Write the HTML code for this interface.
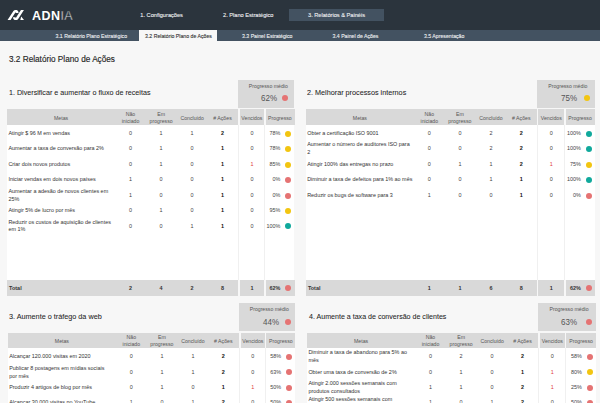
<!DOCTYPE html>
<html><head><meta charset="utf-8"><title>ADNIA - 3.2 Relatório Plano de Ações</title>
<style>
html,body{margin:0;padding:0;}
body{width:600px;height:403px;overflow:hidden;position:relative;background:#f7f7f7;font-family:"Liberation Sans", sans-serif;}
.t{position:absolute;white-space:nowrap;}
.r{position:absolute;}
</style></head><body>
<div class="r" style="left:0.00px;top:0.00px;width:600.00px;height:30.00px;background:#2b343d;"></div>
<div class="r" style="left:289.00px;top:9.00px;width:95.00px;height:12.00px;background:#435261;"></div>
<div class="r" style="left:0.00px;top:30.00px;width:600.00px;height:11.00px;background:#435261;"></div>
<div class="r" style="left:139.00px;top:30.00px;width:78.00px;height:11.00px;background:#f7f7f7;"></div>
<svg class="r" style="left:0;top:0" width="40" height="30" viewBox="0 0 40 30">
<defs><clipPath id="lc"><rect x="0" y="10.1" width="40" height="9.8"/></clipPath></defs>
<g clip-path="url(#lc)" fill="none" stroke="#fff" stroke-width="2.5" stroke-linejoin="round">
<path d="M8.4 21 L14.3 11.9 Q15.1 10.9 16.3 11.2 Q17.4 11.6 17.3 13.0"/>
<path d="M23.3 8.7 L17.1 18.2 Q16.4 19.1 15.3 18.9 Q14.2 18.6 14.2 17.3"/>
</g>
<path d="M21.2 16.4 L24 20 L20.3 20 Z" fill="#fff"/>
</svg>
<div class="t" style="left:32.00px;top:9.72px;font-size:12.5px;line-height:12.5px;color:#fff;font-weight:bold;letter-spacing:0.45px;">ADN<span style="font-weight:normal;-webkit-text-stroke:0.45px #2b343d">IA</span></div>
<div class="t" style="left:140.30px;top:13.12px;font-size:5.65px;line-height:5.65px;color:#eef0f2;font-weight:normal;-webkit-text-stroke:0.1px #eef0f2;">1. Configurações</div>
<div class="t" style="left:223.00px;top:13.12px;font-size:5.65px;line-height:5.65px;color:#eef0f2;font-weight:normal;-webkit-text-stroke:0.1px #eef0f2;">2. Plano Estratégico</div>
<div class="t" style="left:308.00px;top:13.12px;font-size:5.65px;line-height:5.65px;color:#eef0f2;font-weight:normal;-webkit-text-stroke:0.1px #eef0f2;">3. Relatórios &amp; Painéis</div>
<div class="t" style="left:55.50px;top:33.90px;font-size:5.2px;line-height:5.2px;color:#eef0f2;font-weight:normal;-webkit-text-stroke:0.1px #eef0f2;">3.1 Relatório Plano Estratégico</div>
<div class="t" style="left:145.00px;top:33.90px;font-size:5.2px;line-height:5.2px;color:#333;font-weight:normal;-webkit-text-stroke:0.1px #333;">3.2 Relatório Plano de Ações</div>
<div class="t" style="left:242.00px;top:33.90px;font-size:5.2px;line-height:5.2px;color:#eef0f2;font-weight:normal;-webkit-text-stroke:0.1px #eef0f2;">3.3 Painel Estratégico</div>
<div class="t" style="left:332.50px;top:33.90px;font-size:5.2px;line-height:5.2px;color:#eef0f2;font-weight:normal;-webkit-text-stroke:0.1px #eef0f2;">3.4 Painel de Ações</div>
<div class="t" style="left:424.00px;top:33.90px;font-size:5.2px;line-height:5.2px;color:#eef0f2;font-weight:normal;-webkit-text-stroke:0.1px #eef0f2;">3.5 Apresentação</div>
<div class="t" style="left:9.00px;top:54.81px;font-size:8.85px;line-height:8.85px;color:#262626;font-weight:normal;transform:scaleX(0.929);transform-origin:0 0;-webkit-text-stroke:0.15px #262626;">3.2 Relatório Plano de Ações</div>
<div class="t" style="left:8.60px;top:89.28px;font-size:7.7px;line-height:7.7px;color:#1e1e1e;font-weight:normal;transform:scaleX(0.93);transform-origin:0 0;-webkit-text-stroke:0.06px #1e1e1e;">1. Diversificar e aumentar o fluxo de receitas</div>
<div class="r" style="left:238.30px;top:79.50px;width:56.20px;height:28.40px;background:#d9d9d9;"></div>
<div class="t" style="left:208.30px;width:120px;text-align:center;top:83.90px;font-size:5.2px;line-height:5.2px;color:#555;font-weight:normal;">Progresso médio</div>
<div class="t" style="left:156.90px;width:120px;text-align:right;top:94.22px;font-size:8.6px;line-height:8.6px;color:#555;font-weight:normal;transform:scaleX(0.93);transform-origin:100% 0;">62%</div>
<div class="r" style="left:282.00px;top:95.10px;width:6px;height:6px;border-radius:50%;background:#e57373"></div>
<div class="r" style="left:7.10px;top:109.40px;width:231.20px;height:15.30px;background:#d9d9d9;"></div>
<div class="r" style="left:239.50px;top:109.40px;width:24.80px;height:15.30px;background:#d9d9d9;"></div>
<div class="r" style="left:265.50px;top:109.40px;width:29.00px;height:15.30px;background:#d9d9d9;"></div>
<div class="r" style="left:7.10px;top:124.70px;width:287.40px;height:155.30px;background:#fff;"></div>
<div class="r" style="left:238.30px;top:124.70px;width:1.00px;height:155.30px;background:#f0f0f0;"></div>
<div class="r" style="left:264.30px;top:124.70px;width:1.00px;height:155.30px;background:#f0f0f0;"></div>
<div class="r" style="left:7.10px;top:280.00px;width:231.20px;height:15.60px;background:#d9d9d9;"></div>
<div class="r" style="left:239.50px;top:280.00px;width:24.80px;height:15.60px;background:#d9d9d9;"></div>
<div class="r" style="left:265.50px;top:280.00px;width:29.00px;height:15.60px;background:#d9d9d9;"></div>
<div class="t" style="left:1.10px;width:120px;text-align:center;top:115.60px;font-size:5.2px;line-height:5.2px;color:#555;font-weight:normal;">Metas</div>
<div class="t" style="left:70.50px;width:120px;text-align:center;top:111.60px;font-size:5.2px;line-height:5.2px;color:#555;font-weight:normal;">Não</div>
<div class="t" style="left:70.50px;width:120px;text-align:center;top:119.00px;font-size:5.2px;line-height:5.2px;color:#555;font-weight:normal;">iniciado</div>
<div class="t" style="left:101.10px;width:120px;text-align:center;top:111.60px;font-size:5.2px;line-height:5.2px;color:#555;font-weight:normal;">Em</div>
<div class="t" style="left:101.10px;width:120px;text-align:center;top:119.00px;font-size:5.2px;line-height:5.2px;color:#555;font-weight:normal;">progresso</div>
<div class="t" style="left:132.10px;width:120px;text-align:center;top:115.60px;font-size:5.2px;line-height:5.2px;color:#555;font-weight:normal;">Concluído</div>
<div class="t" style="left:162.50px;width:120px;text-align:center;top:115.60px;font-size:5.2px;line-height:5.2px;color:#555;font-weight:normal;"># Ações</div>
<div class="t" style="left:191.90px;width:120px;text-align:center;top:115.60px;font-size:5.2px;line-height:5.2px;color:#555;font-weight:normal;">Vencidos</div>
<div class="t" style="left:219.90px;width:120px;text-align:center;top:115.60px;font-size:5.2px;line-height:5.2px;color:#555;font-weight:normal;">Progresso</div>
<div class="t" style="left:8.40px;top:130.80px;font-size:5.43px;line-height:5.43px;color:#333;font-weight:normal;">Atingir $ 96 M em vendas</div>
<div class="t" style="left:70.50px;width:120px;text-align:center;top:130.80px;font-size:5.43px;line-height:5.43px;color:#444;font-weight:normal;">0</div>
<div class="t" style="left:101.10px;width:120px;text-align:center;top:130.80px;font-size:5.43px;line-height:5.43px;color:#444;font-weight:normal;">1</div>
<div class="t" style="left:132.10px;width:120px;text-align:center;top:130.80px;font-size:5.43px;line-height:5.43px;color:#444;font-weight:normal;">1</div>
<div class="t" style="left:162.50px;width:120px;text-align:center;top:130.80px;font-size:5.43px;line-height:5.43px;color:#111;font-weight:bold;">2</div>
<div class="t" style="left:191.90px;width:120px;text-align:center;top:130.80px;font-size:5.43px;line-height:5.43px;color:#444;font-weight:normal;">0</div>
<div class="t" style="left:160.30px;width:120px;text-align:right;top:130.80px;font-size:5.43px;line-height:5.43px;color:#444;font-weight:normal;">78%</div>
<div class="r" style="left:284.80px;top:130.70px;width:6px;height:6px;border-radius:50%;background:#f2c511"></div>
<div class="t" style="left:8.40px;top:146.25px;font-size:5.43px;line-height:5.43px;color:#333;font-weight:normal;">Aumentar a taxa de conversão para 2%</div>
<div class="t" style="left:70.50px;width:120px;text-align:center;top:146.25px;font-size:5.43px;line-height:5.43px;color:#444;font-weight:normal;">0</div>
<div class="t" style="left:101.10px;width:120px;text-align:center;top:146.25px;font-size:5.43px;line-height:5.43px;color:#444;font-weight:normal;">1</div>
<div class="t" style="left:132.10px;width:120px;text-align:center;top:146.25px;font-size:5.43px;line-height:5.43px;color:#444;font-weight:normal;">0</div>
<div class="t" style="left:162.50px;width:120px;text-align:center;top:146.25px;font-size:5.43px;line-height:5.43px;color:#111;font-weight:bold;">1</div>
<div class="t" style="left:191.90px;width:120px;text-align:center;top:146.25px;font-size:5.43px;line-height:5.43px;color:#444;font-weight:normal;">0</div>
<div class="t" style="left:160.30px;width:120px;text-align:right;top:146.25px;font-size:5.43px;line-height:5.43px;color:#444;font-weight:normal;">78%</div>
<div class="r" style="left:284.80px;top:146.15px;width:6px;height:6px;border-radius:50%;background:#f2c511"></div>
<div class="t" style="left:8.40px;top:161.70px;font-size:5.43px;line-height:5.43px;color:#333;font-weight:normal;">Criar dois novos produtos</div>
<div class="t" style="left:70.50px;width:120px;text-align:center;top:161.70px;font-size:5.43px;line-height:5.43px;color:#444;font-weight:normal;">0</div>
<div class="t" style="left:101.10px;width:120px;text-align:center;top:161.70px;font-size:5.43px;line-height:5.43px;color:#444;font-weight:normal;">1</div>
<div class="t" style="left:132.10px;width:120px;text-align:center;top:161.70px;font-size:5.43px;line-height:5.43px;color:#444;font-weight:normal;">0</div>
<div class="t" style="left:162.50px;width:120px;text-align:center;top:161.70px;font-size:5.43px;line-height:5.43px;color:#111;font-weight:bold;">1</div>
<div class="t" style="left:191.90px;width:120px;text-align:center;top:161.70px;font-size:5.43px;line-height:5.43px;color:#e03c3c;font-weight:normal;">1</div>
<div class="t" style="left:160.30px;width:120px;text-align:right;top:161.70px;font-size:5.43px;line-height:5.43px;color:#444;font-weight:normal;">85%</div>
<div class="r" style="left:284.80px;top:161.60px;width:6px;height:6px;border-radius:50%;background:#f2c511"></div>
<div class="t" style="left:8.40px;top:177.15px;font-size:5.43px;line-height:5.43px;color:#333;font-weight:normal;">Iniciar vendas em dois novos países</div>
<div class="t" style="left:70.50px;width:120px;text-align:center;top:177.15px;font-size:5.43px;line-height:5.43px;color:#444;font-weight:normal;">1</div>
<div class="t" style="left:101.10px;width:120px;text-align:center;top:177.15px;font-size:5.43px;line-height:5.43px;color:#444;font-weight:normal;">0</div>
<div class="t" style="left:132.10px;width:120px;text-align:center;top:177.15px;font-size:5.43px;line-height:5.43px;color:#444;font-weight:normal;">0</div>
<div class="t" style="left:162.50px;width:120px;text-align:center;top:177.15px;font-size:5.43px;line-height:5.43px;color:#111;font-weight:bold;">1</div>
<div class="t" style="left:191.90px;width:120px;text-align:center;top:177.15px;font-size:5.43px;line-height:5.43px;color:#444;font-weight:normal;">0</div>
<div class="t" style="left:160.30px;width:120px;text-align:right;top:177.15px;font-size:5.43px;line-height:5.43px;color:#444;font-weight:normal;">0%</div>
<div class="r" style="left:284.80px;top:177.05px;width:6px;height:6px;border-radius:50%;background:#e57373"></div>
<div class="t" style="left:8.40px;top:188.65px;font-size:5.43px;line-height:5.43px;color:#333;font-weight:normal;">Aumentar a adesão de novos clientes em</div>
<div class="t" style="left:8.40px;top:196.55px;font-size:5.43px;line-height:5.43px;color:#333;font-weight:normal;">25%</div>
<div class="t" style="left:70.50px;width:120px;text-align:center;top:192.60px;font-size:5.43px;line-height:5.43px;color:#444;font-weight:normal;">1</div>
<div class="t" style="left:101.10px;width:120px;text-align:center;top:192.60px;font-size:5.43px;line-height:5.43px;color:#444;font-weight:normal;">0</div>
<div class="t" style="left:132.10px;width:120px;text-align:center;top:192.60px;font-size:5.43px;line-height:5.43px;color:#444;font-weight:normal;">0</div>
<div class="t" style="left:162.50px;width:120px;text-align:center;top:192.60px;font-size:5.43px;line-height:5.43px;color:#111;font-weight:bold;">1</div>
<div class="t" style="left:191.90px;width:120px;text-align:center;top:192.60px;font-size:5.43px;line-height:5.43px;color:#444;font-weight:normal;">0</div>
<div class="t" style="left:160.30px;width:120px;text-align:right;top:192.60px;font-size:5.43px;line-height:5.43px;color:#444;font-weight:normal;">0%</div>
<div class="r" style="left:284.80px;top:192.50px;width:6px;height:6px;border-radius:50%;background:#e57373"></div>
<div class="t" style="left:8.40px;top:208.05px;font-size:5.43px;line-height:5.43px;color:#333;font-weight:normal;">Atingir 5% de lucro por mês</div>
<div class="t" style="left:70.50px;width:120px;text-align:center;top:208.05px;font-size:5.43px;line-height:5.43px;color:#444;font-weight:normal;">0</div>
<div class="t" style="left:101.10px;width:120px;text-align:center;top:208.05px;font-size:5.43px;line-height:5.43px;color:#444;font-weight:normal;">1</div>
<div class="t" style="left:132.10px;width:120px;text-align:center;top:208.05px;font-size:5.43px;line-height:5.43px;color:#444;font-weight:normal;">0</div>
<div class="t" style="left:162.50px;width:120px;text-align:center;top:208.05px;font-size:5.43px;line-height:5.43px;color:#111;font-weight:bold;">1</div>
<div class="t" style="left:191.90px;width:120px;text-align:center;top:208.05px;font-size:5.43px;line-height:5.43px;color:#444;font-weight:normal;">0</div>
<div class="t" style="left:160.30px;width:120px;text-align:right;top:208.05px;font-size:5.43px;line-height:5.43px;color:#444;font-weight:normal;">95%</div>
<div class="r" style="left:284.80px;top:207.95px;width:6px;height:6px;border-radius:50%;background:#f2c511"></div>
<div class="t" style="left:8.40px;top:219.55px;font-size:5.43px;line-height:5.43px;color:#333;font-weight:normal;">Reduzir os custos de aquisição de clientes</div>
<div class="t" style="left:8.40px;top:227.45px;font-size:5.43px;line-height:5.43px;color:#333;font-weight:normal;">em 1%</div>
<div class="t" style="left:70.50px;width:120px;text-align:center;top:223.50px;font-size:5.43px;line-height:5.43px;color:#444;font-weight:normal;">0</div>
<div class="t" style="left:101.10px;width:120px;text-align:center;top:223.50px;font-size:5.43px;line-height:5.43px;color:#444;font-weight:normal;">0</div>
<div class="t" style="left:132.10px;width:120px;text-align:center;top:223.50px;font-size:5.43px;line-height:5.43px;color:#444;font-weight:normal;">1</div>
<div class="t" style="left:162.50px;width:120px;text-align:center;top:223.50px;font-size:5.43px;line-height:5.43px;color:#111;font-weight:bold;">1</div>
<div class="t" style="left:191.90px;width:120px;text-align:center;top:223.50px;font-size:5.43px;line-height:5.43px;color:#444;font-weight:normal;">0</div>
<div class="t" style="left:160.30px;width:120px;text-align:right;top:223.50px;font-size:5.43px;line-height:5.43px;color:#444;font-weight:normal;">100%</div>
<div class="r" style="left:284.80px;top:223.40px;width:6px;height:6px;border-radius:50%;background:#10a99c"></div>
<div class="t" style="left:9.10px;top:285.50px;font-size:5.43px;line-height:5.43px;color:#333;font-weight:bold;">Total</div>
<div class="t" style="left:70.50px;width:120px;text-align:center;top:285.50px;font-size:5.43px;line-height:5.43px;color:#333;font-weight:bold;">2</div>
<div class="t" style="left:101.10px;width:120px;text-align:center;top:285.50px;font-size:5.43px;line-height:5.43px;color:#333;font-weight:bold;">4</div>
<div class="t" style="left:132.10px;width:120px;text-align:center;top:285.50px;font-size:5.43px;line-height:5.43px;color:#333;font-weight:bold;">2</div>
<div class="t" style="left:162.50px;width:120px;text-align:center;top:285.50px;font-size:5.43px;line-height:5.43px;color:#333;font-weight:bold;">8</div>
<div class="t" style="left:191.90px;width:120px;text-align:center;top:285.50px;font-size:5.43px;line-height:5.43px;color:#333;font-weight:bold;">1</div>
<div class="t" style="left:160.30px;width:120px;text-align:right;top:285.50px;font-size:5.43px;line-height:5.43px;color:#333;font-weight:bold;">62%</div>
<div class="r" style="left:284.80px;top:285.30px;width:6px;height:6px;border-radius:50%;background:#e57373"></div>
<div class="t" style="left:307.40px;top:89.28px;font-size:7.7px;line-height:7.7px;color:#1e1e1e;font-weight:normal;transform:scaleX(0.9405);transform-origin:0 0;-webkit-text-stroke:0.06px #1e1e1e;">2. Melhorar processos internos</div>
<div class="r" style="left:537.10px;top:79.50px;width:57.65px;height:28.40px;background:#d9d9d9;"></div>
<div class="t" style="left:507.82px;width:120px;text-align:center;top:83.90px;font-size:5.2px;line-height:5.2px;color:#555;font-weight:normal;">Progresso médio</div>
<div class="t" style="left:457.30px;width:120px;text-align:right;top:94.22px;font-size:8.6px;line-height:8.6px;color:#555;font-weight:normal;transform:scaleX(0.93);transform-origin:100% 0;">75%</div>
<div class="r" style="left:584.00px;top:95.10px;width:6px;height:6px;border-radius:50%;background:#f2c511"></div>
<div class="r" style="left:305.90px;top:109.40px;width:231.20px;height:15.30px;background:#d9d9d9;"></div>
<div class="r" style="left:538.30px;top:109.40px;width:26.00px;height:15.30px;background:#d9d9d9;"></div>
<div class="r" style="left:565.50px;top:109.40px;width:29.25px;height:15.30px;background:#d9d9d9;"></div>
<div class="r" style="left:305.90px;top:124.70px;width:288.85px;height:155.30px;background:#fff;"></div>
<div class="r" style="left:537.10px;top:124.70px;width:1.00px;height:155.30px;background:#f0f0f0;"></div>
<div class="r" style="left:564.30px;top:124.70px;width:1.00px;height:155.30px;background:#f0f0f0;"></div>
<div class="r" style="left:305.90px;top:280.00px;width:231.20px;height:15.60px;background:#d9d9d9;"></div>
<div class="r" style="left:538.30px;top:280.00px;width:26.00px;height:15.60px;background:#d9d9d9;"></div>
<div class="r" style="left:565.50px;top:280.00px;width:29.25px;height:15.60px;background:#d9d9d9;"></div>
<div class="t" style="left:299.90px;width:120px;text-align:center;top:115.60px;font-size:5.2px;line-height:5.2px;color:#555;font-weight:normal;">Metas</div>
<div class="t" style="left:369.30px;width:120px;text-align:center;top:111.60px;font-size:5.2px;line-height:5.2px;color:#555;font-weight:normal;">Não</div>
<div class="t" style="left:369.30px;width:120px;text-align:center;top:119.00px;font-size:5.2px;line-height:5.2px;color:#555;font-weight:normal;">iniciado</div>
<div class="t" style="left:399.90px;width:120px;text-align:center;top:111.60px;font-size:5.2px;line-height:5.2px;color:#555;font-weight:normal;">Em</div>
<div class="t" style="left:399.90px;width:120px;text-align:center;top:119.00px;font-size:5.2px;line-height:5.2px;color:#555;font-weight:normal;">progresso</div>
<div class="t" style="left:430.90px;width:120px;text-align:center;top:115.60px;font-size:5.2px;line-height:5.2px;color:#555;font-weight:normal;">Concluído</div>
<div class="t" style="left:461.30px;width:120px;text-align:center;top:115.60px;font-size:5.2px;line-height:5.2px;color:#555;font-weight:normal;"># Ações</div>
<div class="t" style="left:491.30px;width:120px;text-align:center;top:115.60px;font-size:5.2px;line-height:5.2px;color:#555;font-weight:normal;">Vencidos</div>
<div class="t" style="left:520.02px;width:120px;text-align:center;top:115.60px;font-size:5.2px;line-height:5.2px;color:#555;font-weight:normal;">Progresso</div>
<div class="t" style="left:307.20px;top:130.80px;font-size:5.43px;line-height:5.43px;color:#333;font-weight:normal;">Obter a certificação ISO 9001</div>
<div class="t" style="left:369.30px;width:120px;text-align:center;top:130.80px;font-size:5.43px;line-height:5.43px;color:#444;font-weight:normal;">0</div>
<div class="t" style="left:399.90px;width:120px;text-align:center;top:130.80px;font-size:5.43px;line-height:5.43px;color:#444;font-weight:normal;">0</div>
<div class="t" style="left:430.90px;width:120px;text-align:center;top:130.80px;font-size:5.43px;line-height:5.43px;color:#444;font-weight:normal;">2</div>
<div class="t" style="left:461.30px;width:120px;text-align:center;top:130.80px;font-size:5.43px;line-height:5.43px;color:#111;font-weight:bold;">2</div>
<div class="t" style="left:491.30px;width:120px;text-align:center;top:130.80px;font-size:5.43px;line-height:5.43px;color:#444;font-weight:normal;">0</div>
<div class="t" style="left:460.80px;width:120px;text-align:right;top:130.80px;font-size:5.43px;line-height:5.43px;color:#444;font-weight:normal;">100%</div>
<div class="r" style="left:585.70px;top:130.70px;width:6px;height:6px;border-radius:50%;background:#10a99c"></div>
<div class="t" style="left:307.20px;top:142.30px;font-size:5.43px;line-height:5.43px;color:#333;font-weight:normal;">Aumentar o número de auditores ISO para</div>
<div class="t" style="left:307.20px;top:150.20px;font-size:5.43px;line-height:5.43px;color:#333;font-weight:normal;">2</div>
<div class="t" style="left:369.30px;width:120px;text-align:center;top:146.25px;font-size:5.43px;line-height:5.43px;color:#444;font-weight:normal;">0</div>
<div class="t" style="left:399.90px;width:120px;text-align:center;top:146.25px;font-size:5.43px;line-height:5.43px;color:#444;font-weight:normal;">0</div>
<div class="t" style="left:430.90px;width:120px;text-align:center;top:146.25px;font-size:5.43px;line-height:5.43px;color:#444;font-weight:normal;">2</div>
<div class="t" style="left:461.30px;width:120px;text-align:center;top:146.25px;font-size:5.43px;line-height:5.43px;color:#111;font-weight:bold;">2</div>
<div class="t" style="left:491.30px;width:120px;text-align:center;top:146.25px;font-size:5.43px;line-height:5.43px;color:#444;font-weight:normal;">0</div>
<div class="t" style="left:460.80px;width:120px;text-align:right;top:146.25px;font-size:5.43px;line-height:5.43px;color:#444;font-weight:normal;">100%</div>
<div class="r" style="left:585.70px;top:146.15px;width:6px;height:6px;border-radius:50%;background:#10a99c"></div>
<div class="t" style="left:307.20px;top:161.70px;font-size:5.43px;line-height:5.43px;color:#333;font-weight:normal;">Atingir 100% das entregas no prazo</div>
<div class="t" style="left:369.30px;width:120px;text-align:center;top:161.70px;font-size:5.43px;line-height:5.43px;color:#444;font-weight:normal;">0</div>
<div class="t" style="left:399.90px;width:120px;text-align:center;top:161.70px;font-size:5.43px;line-height:5.43px;color:#444;font-weight:normal;">1</div>
<div class="t" style="left:430.90px;width:120px;text-align:center;top:161.70px;font-size:5.43px;line-height:5.43px;color:#444;font-weight:normal;">1</div>
<div class="t" style="left:461.30px;width:120px;text-align:center;top:161.70px;font-size:5.43px;line-height:5.43px;color:#111;font-weight:bold;">2</div>
<div class="t" style="left:491.30px;width:120px;text-align:center;top:161.70px;font-size:5.43px;line-height:5.43px;color:#e03c3c;font-weight:normal;">1</div>
<div class="t" style="left:460.80px;width:120px;text-align:right;top:161.70px;font-size:5.43px;line-height:5.43px;color:#444;font-weight:normal;">75%</div>
<div class="r" style="left:585.70px;top:161.60px;width:6px;height:6px;border-radius:50%;background:#f2c511"></div>
<div class="t" style="left:307.20px;top:177.15px;font-size:5.43px;line-height:5.43px;color:#333;font-weight:normal;">Diminuir a taxa de defeitos para 1% ao mês</div>
<div class="t" style="left:369.30px;width:120px;text-align:center;top:177.15px;font-size:5.43px;line-height:5.43px;color:#444;font-weight:normal;">0</div>
<div class="t" style="left:399.90px;width:120px;text-align:center;top:177.15px;font-size:5.43px;line-height:5.43px;color:#444;font-weight:normal;">0</div>
<div class="t" style="left:430.90px;width:120px;text-align:center;top:177.15px;font-size:5.43px;line-height:5.43px;color:#444;font-weight:normal;">1</div>
<div class="t" style="left:461.30px;width:120px;text-align:center;top:177.15px;font-size:5.43px;line-height:5.43px;color:#111;font-weight:bold;">1</div>
<div class="t" style="left:491.30px;width:120px;text-align:center;top:177.15px;font-size:5.43px;line-height:5.43px;color:#444;font-weight:normal;">0</div>
<div class="t" style="left:460.80px;width:120px;text-align:right;top:177.15px;font-size:5.43px;line-height:5.43px;color:#444;font-weight:normal;">100%</div>
<div class="r" style="left:585.70px;top:177.05px;width:6px;height:6px;border-radius:50%;background:#10a99c"></div>
<div class="t" style="left:307.20px;top:192.60px;font-size:5.43px;line-height:5.43px;color:#333;font-weight:normal;">Reduzir os bugs de software para 3</div>
<div class="t" style="left:369.30px;width:120px;text-align:center;top:192.60px;font-size:5.43px;line-height:5.43px;color:#444;font-weight:normal;">1</div>
<div class="t" style="left:399.90px;width:120px;text-align:center;top:192.60px;font-size:5.43px;line-height:5.43px;color:#444;font-weight:normal;">0</div>
<div class="t" style="left:430.90px;width:120px;text-align:center;top:192.60px;font-size:5.43px;line-height:5.43px;color:#444;font-weight:normal;">0</div>
<div class="t" style="left:461.30px;width:120px;text-align:center;top:192.60px;font-size:5.43px;line-height:5.43px;color:#111;font-weight:bold;">1</div>
<div class="t" style="left:491.30px;width:120px;text-align:center;top:192.60px;font-size:5.43px;line-height:5.43px;color:#444;font-weight:normal;">0</div>
<div class="t" style="left:460.80px;width:120px;text-align:right;top:192.60px;font-size:5.43px;line-height:5.43px;color:#444;font-weight:normal;">0%</div>
<div class="r" style="left:585.70px;top:192.50px;width:6px;height:6px;border-radius:50%;background:#e57373"></div>
<div class="t" style="left:307.90px;top:285.50px;font-size:5.43px;line-height:5.43px;color:#333;font-weight:bold;">Total</div>
<div class="t" style="left:369.30px;width:120px;text-align:center;top:285.50px;font-size:5.43px;line-height:5.43px;color:#333;font-weight:bold;">1</div>
<div class="t" style="left:399.90px;width:120px;text-align:center;top:285.50px;font-size:5.43px;line-height:5.43px;color:#333;font-weight:bold;">1</div>
<div class="t" style="left:430.90px;width:120px;text-align:center;top:285.50px;font-size:5.43px;line-height:5.43px;color:#333;font-weight:bold;">6</div>
<div class="t" style="left:461.30px;width:120px;text-align:center;top:285.50px;font-size:5.43px;line-height:5.43px;color:#333;font-weight:bold;">8</div>
<div class="t" style="left:491.30px;width:120px;text-align:center;top:285.50px;font-size:5.43px;line-height:5.43px;color:#333;font-weight:bold;">1</div>
<div class="t" style="left:460.80px;width:120px;text-align:right;top:285.50px;font-size:5.43px;line-height:5.43px;color:#333;font-weight:bold;">62%</div>
<div class="r" style="left:585.70px;top:285.30px;width:6px;height:6px;border-radius:50%;background:#e57373"></div>
<div class="t" style="left:9.40px;top:312.58px;font-size:7.7px;line-height:7.7px;color:#1e1e1e;font-weight:normal;transform:scaleX(0.943);transform-origin:0 0;-webkit-text-stroke:0.06px #1e1e1e;">3. Aumente o tráfego da web</div>
<div class="r" style="left:239.30px;top:302.80px;width:56.20px;height:28.40px;background:#d9d9d9;"></div>
<div class="t" style="left:209.30px;width:120px;text-align:center;top:307.20px;font-size:5.2px;line-height:5.2px;color:#555;font-weight:normal;">Progresso médio</div>
<div class="t" style="left:158.90px;width:120px;text-align:right;top:317.52px;font-size:8.6px;line-height:8.6px;color:#555;font-weight:normal;transform:scaleX(0.93);transform-origin:100% 0;">44%</div>
<div class="r" style="left:284.90px;top:318.80px;width:6px;height:6px;border-radius:50%;background:#e57373"></div>
<div class="r" style="left:7.90px;top:332.70px;width:231.40px;height:15.30px;background:#d9d9d9;"></div>
<div class="r" style="left:240.50px;top:332.70px;width:24.70px;height:15.30px;background:#d9d9d9;"></div>
<div class="r" style="left:266.40px;top:332.70px;width:29.10px;height:15.30px;background:#d9d9d9;"></div>
<div class="r" style="left:7.90px;top:348.00px;width:287.60px;height:155.30px;background:#fff;"></div>
<div class="r" style="left:239.30px;top:348.00px;width:1.00px;height:155.30px;background:#f0f0f0;"></div>
<div class="r" style="left:265.20px;top:348.00px;width:1.00px;height:155.30px;background:#f0f0f0;"></div>
<div class="r" style="left:7.90px;top:503.30px;width:231.40px;height:15.60px;background:#d9d9d9;"></div>
<div class="r" style="left:240.50px;top:503.30px;width:24.70px;height:15.60px;background:#d9d9d9;"></div>
<div class="r" style="left:266.40px;top:503.30px;width:29.10px;height:15.60px;background:#d9d9d9;"></div>
<div class="t" style="left:1.90px;width:120px;text-align:center;top:338.90px;font-size:5.2px;line-height:5.2px;color:#555;font-weight:normal;">Metas</div>
<div class="t" style="left:71.30px;width:120px;text-align:center;top:334.90px;font-size:5.2px;line-height:5.2px;color:#555;font-weight:normal;">Não</div>
<div class="t" style="left:71.30px;width:120px;text-align:center;top:342.30px;font-size:5.2px;line-height:5.2px;color:#555;font-weight:normal;">iniciado</div>
<div class="t" style="left:101.90px;width:120px;text-align:center;top:334.90px;font-size:5.2px;line-height:5.2px;color:#555;font-weight:normal;">Em</div>
<div class="t" style="left:101.90px;width:120px;text-align:center;top:342.30px;font-size:5.2px;line-height:5.2px;color:#555;font-weight:normal;">progresso</div>
<div class="t" style="left:132.90px;width:120px;text-align:center;top:338.90px;font-size:5.2px;line-height:5.2px;color:#555;font-weight:normal;">Concluído</div>
<div class="t" style="left:163.30px;width:120px;text-align:center;top:338.90px;font-size:5.2px;line-height:5.2px;color:#555;font-weight:normal;"># Ações</div>
<div class="t" style="left:192.85px;width:120px;text-align:center;top:338.90px;font-size:5.2px;line-height:5.2px;color:#555;font-weight:normal;">Vencidos</div>
<div class="t" style="left:220.85px;width:120px;text-align:center;top:338.90px;font-size:5.2px;line-height:5.2px;color:#555;font-weight:normal;">Progresso</div>
<div class="t" style="left:9.20px;top:354.10px;font-size:5.43px;line-height:5.43px;color:#333;font-weight:normal;">Alcançar 120.000 visitas em 2020</div>
<div class="t" style="left:71.30px;width:120px;text-align:center;top:354.10px;font-size:5.43px;line-height:5.43px;color:#444;font-weight:normal;">0</div>
<div class="t" style="left:101.90px;width:120px;text-align:center;top:354.10px;font-size:5.43px;line-height:5.43px;color:#444;font-weight:normal;">1</div>
<div class="t" style="left:132.90px;width:120px;text-align:center;top:354.10px;font-size:5.43px;line-height:5.43px;color:#444;font-weight:normal;">1</div>
<div class="t" style="left:163.30px;width:120px;text-align:center;top:354.10px;font-size:5.43px;line-height:5.43px;color:#111;font-weight:bold;">2</div>
<div class="t" style="left:192.85px;width:120px;text-align:center;top:354.10px;font-size:5.43px;line-height:5.43px;color:#444;font-weight:normal;">0</div>
<div class="t" style="left:161.20px;width:120px;text-align:right;top:354.10px;font-size:5.43px;line-height:5.43px;color:#444;font-weight:normal;">58%</div>
<div class="r" style="left:286.00px;top:354.00px;width:6px;height:6px;border-radius:50%;background:#e57373"></div>
<div class="t" style="left:9.20px;top:365.60px;font-size:5.43px;line-height:5.43px;color:#333;font-weight:normal;">Publicar 8 postagens em mídias sociais</div>
<div class="t" style="left:9.20px;top:373.50px;font-size:5.43px;line-height:5.43px;color:#333;font-weight:normal;">por mês</div>
<div class="t" style="left:71.30px;width:120px;text-align:center;top:369.55px;font-size:5.43px;line-height:5.43px;color:#444;font-weight:normal;">0</div>
<div class="t" style="left:101.90px;width:120px;text-align:center;top:369.55px;font-size:5.43px;line-height:5.43px;color:#444;font-weight:normal;">1</div>
<div class="t" style="left:132.90px;width:120px;text-align:center;top:369.55px;font-size:5.43px;line-height:5.43px;color:#444;font-weight:normal;">1</div>
<div class="t" style="left:163.30px;width:120px;text-align:center;top:369.55px;font-size:5.43px;line-height:5.43px;color:#111;font-weight:bold;">2</div>
<div class="t" style="left:192.85px;width:120px;text-align:center;top:369.55px;font-size:5.43px;line-height:5.43px;color:#444;font-weight:normal;">0</div>
<div class="t" style="left:161.20px;width:120px;text-align:right;top:369.55px;font-size:5.43px;line-height:5.43px;color:#444;font-weight:normal;">63%</div>
<div class="r" style="left:286.00px;top:369.45px;width:6px;height:6px;border-radius:50%;background:#e57373"></div>
<div class="t" style="left:9.20px;top:385.00px;font-size:5.43px;line-height:5.43px;color:#333;font-weight:normal;">Produzir 4 artigos de blog por mês</div>
<div class="t" style="left:71.30px;width:120px;text-align:center;top:385.00px;font-size:5.43px;line-height:5.43px;color:#444;font-weight:normal;">0</div>
<div class="t" style="left:101.90px;width:120px;text-align:center;top:385.00px;font-size:5.43px;line-height:5.43px;color:#444;font-weight:normal;">1</div>
<div class="t" style="left:132.90px;width:120px;text-align:center;top:385.00px;font-size:5.43px;line-height:5.43px;color:#444;font-weight:normal;">0</div>
<div class="t" style="left:163.30px;width:120px;text-align:center;top:385.00px;font-size:5.43px;line-height:5.43px;color:#111;font-weight:bold;">1</div>
<div class="t" style="left:192.85px;width:120px;text-align:center;top:385.00px;font-size:5.43px;line-height:5.43px;color:#e03c3c;font-weight:normal;">1</div>
<div class="t" style="left:161.20px;width:120px;text-align:right;top:385.00px;font-size:5.43px;line-height:5.43px;color:#444;font-weight:normal;">50%</div>
<div class="r" style="left:286.00px;top:384.90px;width:6px;height:6px;border-radius:50%;background:#e57373"></div>
<div class="t" style="left:9.20px;top:400.45px;font-size:5.43px;line-height:5.43px;color:#333;font-weight:normal;">Alcançar 30.000 visitas no YouTube</div>
<div class="t" style="left:71.30px;width:120px;text-align:center;top:400.45px;font-size:5.43px;line-height:5.43px;color:#444;font-weight:normal;">1</div>
<div class="t" style="left:101.90px;width:120px;text-align:center;top:400.45px;font-size:5.43px;line-height:5.43px;color:#444;font-weight:normal;">0</div>
<div class="t" style="left:132.90px;width:120px;text-align:center;top:400.45px;font-size:5.43px;line-height:5.43px;color:#444;font-weight:normal;">1</div>
<div class="t" style="left:163.30px;width:120px;text-align:center;top:400.45px;font-size:5.43px;line-height:5.43px;color:#111;font-weight:bold;">2</div>
<div class="t" style="left:192.85px;width:120px;text-align:center;top:400.45px;font-size:5.43px;line-height:5.43px;color:#444;font-weight:normal;">0</div>
<div class="t" style="left:161.20px;width:120px;text-align:right;top:400.45px;font-size:5.43px;line-height:5.43px;color:#444;font-weight:normal;">50%</div>
<div class="r" style="left:286.00px;top:400.35px;width:6px;height:6px;border-radius:50%;background:#e57373"></div>
<div class="t" style="left:9.90px;top:508.80px;font-size:5.43px;line-height:5.43px;color:#333;font-weight:bold;">Total</div>
<div class="t" style="left:71.30px;width:120px;text-align:center;top:508.80px;font-size:5.43px;line-height:5.43px;color:#333;font-weight:bold;">1</div>
<div class="t" style="left:101.90px;width:120px;text-align:center;top:508.80px;font-size:5.43px;line-height:5.43px;color:#333;font-weight:bold;">3</div>
<div class="t" style="left:132.90px;width:120px;text-align:center;top:508.80px;font-size:5.43px;line-height:5.43px;color:#333;font-weight:bold;">3</div>
<div class="t" style="left:163.30px;width:120px;text-align:center;top:508.80px;font-size:5.43px;line-height:5.43px;color:#333;font-weight:bold;">6</div>
<div class="t" style="left:192.85px;width:120px;text-align:center;top:508.80px;font-size:5.43px;line-height:5.43px;color:#333;font-weight:bold;">1</div>
<div class="t" style="left:161.20px;width:120px;text-align:right;top:508.80px;font-size:5.43px;line-height:5.43px;color:#333;font-weight:bold;">44%</div>
<div class="r" style="left:286.00px;top:508.60px;width:6px;height:6px;border-radius:50%;background:#e57373"></div>
<div class="t" style="left:308.60px;top:312.58px;font-size:7.7px;line-height:7.7px;color:#1e1e1e;font-weight:normal;transform:scaleX(0.921);transform-origin:0 0;-webkit-text-stroke:0.06px #1e1e1e;">4. Aumente a taxa de conversão de clientes</div>
<div class="r" style="left:538.30px;top:302.80px;width:57.70px;height:28.40px;background:#d9d9d9;"></div>
<div class="t" style="left:509.05px;width:120px;text-align:center;top:307.20px;font-size:5.2px;line-height:5.2px;color:#555;font-weight:normal;">Progresso médio</div>
<div class="t" style="left:457.20px;width:120px;text-align:right;top:317.52px;font-size:8.6px;line-height:8.6px;color:#555;font-weight:normal;transform:scaleX(0.93);transform-origin:100% 0;">63%</div>
<div class="r" style="left:585.70px;top:319.20px;width:6px;height:6px;border-radius:50%;background:#e57373"></div>
<div class="r" style="left:307.10px;top:332.70px;width:231.20px;height:15.30px;background:#d9d9d9;"></div>
<div class="r" style="left:539.50px;top:332.70px;width:25.70px;height:15.30px;background:#d9d9d9;"></div>
<div class="r" style="left:566.40px;top:332.70px;width:29.60px;height:15.30px;background:#d9d9d9;"></div>
<div class="r" style="left:307.10px;top:348.00px;width:288.90px;height:155.30px;background:#fff;"></div>
<div class="r" style="left:538.30px;top:348.00px;width:1.00px;height:155.30px;background:#f0f0f0;"></div>
<div class="r" style="left:565.20px;top:348.00px;width:1.00px;height:155.30px;background:#f0f0f0;"></div>
<div class="r" style="left:307.10px;top:503.30px;width:231.20px;height:15.60px;background:#d9d9d9;"></div>
<div class="r" style="left:539.50px;top:503.30px;width:25.70px;height:15.60px;background:#d9d9d9;"></div>
<div class="r" style="left:566.40px;top:503.30px;width:29.60px;height:15.60px;background:#d9d9d9;"></div>
<div class="t" style="left:301.10px;width:120px;text-align:center;top:338.90px;font-size:5.2px;line-height:5.2px;color:#555;font-weight:normal;">Metas</div>
<div class="t" style="left:370.50px;width:120px;text-align:center;top:334.90px;font-size:5.2px;line-height:5.2px;color:#555;font-weight:normal;">Não</div>
<div class="t" style="left:370.50px;width:120px;text-align:center;top:342.30px;font-size:5.2px;line-height:5.2px;color:#555;font-weight:normal;">iniciado</div>
<div class="t" style="left:401.10px;width:120px;text-align:center;top:334.90px;font-size:5.2px;line-height:5.2px;color:#555;font-weight:normal;">Em</div>
<div class="t" style="left:401.10px;width:120px;text-align:center;top:342.30px;font-size:5.2px;line-height:5.2px;color:#555;font-weight:normal;">progresso</div>
<div class="t" style="left:432.10px;width:120px;text-align:center;top:338.90px;font-size:5.2px;line-height:5.2px;color:#555;font-weight:normal;">Concluído</div>
<div class="t" style="left:462.50px;width:120px;text-align:center;top:338.90px;font-size:5.2px;line-height:5.2px;color:#555;font-weight:normal;"># Ações</div>
<div class="t" style="left:492.35px;width:120px;text-align:center;top:338.90px;font-size:5.2px;line-height:5.2px;color:#555;font-weight:normal;">Vencidos</div>
<div class="t" style="left:521.10px;width:120px;text-align:center;top:338.90px;font-size:5.2px;line-height:5.2px;color:#555;font-weight:normal;">Progresso</div>
<div class="t" style="left:308.40px;top:350.15px;font-size:5.43px;line-height:5.43px;color:#333;font-weight:normal;">Diminuir a taxa de abandono para 5% ao</div>
<div class="t" style="left:308.40px;top:358.05px;font-size:5.43px;line-height:5.43px;color:#333;font-weight:normal;">mês</div>
<div class="t" style="left:370.50px;width:120px;text-align:center;top:354.10px;font-size:5.43px;line-height:5.43px;color:#444;font-weight:normal;">0</div>
<div class="t" style="left:401.10px;width:120px;text-align:center;top:354.10px;font-size:5.43px;line-height:5.43px;color:#444;font-weight:normal;">2</div>
<div class="t" style="left:432.10px;width:120px;text-align:center;top:354.10px;font-size:5.43px;line-height:5.43px;color:#444;font-weight:normal;">0</div>
<div class="t" style="left:462.50px;width:120px;text-align:center;top:354.10px;font-size:5.43px;line-height:5.43px;color:#111;font-weight:bold;">2</div>
<div class="t" style="left:492.35px;width:120px;text-align:center;top:354.10px;font-size:5.43px;line-height:5.43px;color:#444;font-weight:normal;">0</div>
<div class="t" style="left:461.80px;width:120px;text-align:right;top:354.10px;font-size:5.43px;line-height:5.43px;color:#444;font-weight:normal;">58%</div>
<div class="r" style="left:586.60px;top:354.00px;width:6px;height:6px;border-radius:50%;background:#e57373"></div>
<div class="t" style="left:308.40px;top:369.55px;font-size:5.43px;line-height:5.43px;color:#333;font-weight:normal;">Obter uma taxa de conversão de 2%</div>
<div class="t" style="left:370.50px;width:120px;text-align:center;top:369.55px;font-size:5.43px;line-height:5.43px;color:#444;font-weight:normal;">0</div>
<div class="t" style="left:401.10px;width:120px;text-align:center;top:369.55px;font-size:5.43px;line-height:5.43px;color:#444;font-weight:normal;">1</div>
<div class="t" style="left:432.10px;width:120px;text-align:center;top:369.55px;font-size:5.43px;line-height:5.43px;color:#444;font-weight:normal;">0</div>
<div class="t" style="left:462.50px;width:120px;text-align:center;top:369.55px;font-size:5.43px;line-height:5.43px;color:#111;font-weight:bold;">1</div>
<div class="t" style="left:492.35px;width:120px;text-align:center;top:369.55px;font-size:5.43px;line-height:5.43px;color:#e03c3c;font-weight:normal;">1</div>
<div class="t" style="left:461.80px;width:120px;text-align:right;top:369.55px;font-size:5.43px;line-height:5.43px;color:#444;font-weight:normal;">80%</div>
<div class="r" style="left:586.60px;top:369.45px;width:6px;height:6px;border-radius:50%;background:#f2c511"></div>
<div class="t" style="left:308.40px;top:381.05px;font-size:5.43px;line-height:5.43px;color:#333;font-weight:normal;">Atingir 2.000 sessões semanais com</div>
<div class="t" style="left:308.40px;top:388.95px;font-size:5.43px;line-height:5.43px;color:#333;font-weight:normal;">produtos consultados</div>
<div class="t" style="left:370.50px;width:120px;text-align:center;top:385.00px;font-size:5.43px;line-height:5.43px;color:#444;font-weight:normal;">1</div>
<div class="t" style="left:401.10px;width:120px;text-align:center;top:385.00px;font-size:5.43px;line-height:5.43px;color:#444;font-weight:normal;">1</div>
<div class="t" style="left:432.10px;width:120px;text-align:center;top:385.00px;font-size:5.43px;line-height:5.43px;color:#444;font-weight:normal;">0</div>
<div class="t" style="left:462.50px;width:120px;text-align:center;top:385.00px;font-size:5.43px;line-height:5.43px;color:#111;font-weight:bold;">2</div>
<div class="t" style="left:492.35px;width:120px;text-align:center;top:385.00px;font-size:5.43px;line-height:5.43px;color:#e03c3c;font-weight:normal;">1</div>
<div class="t" style="left:461.80px;width:120px;text-align:right;top:385.00px;font-size:5.43px;line-height:5.43px;color:#444;font-weight:normal;">25%</div>
<div class="r" style="left:586.60px;top:384.90px;width:6px;height:6px;border-radius:50%;background:#e57373"></div>
<div class="t" style="left:308.40px;top:396.50px;font-size:5.43px;line-height:5.43px;color:#333;font-weight:normal;">Atingir 500 sessões semanais com</div>
<div class="t" style="left:308.40px;top:404.40px;font-size:5.43px;line-height:5.43px;color:#333;font-weight:normal;">produtos visualizados</div>
<div class="t" style="left:370.50px;width:120px;text-align:center;top:400.45px;font-size:5.43px;line-height:5.43px;color:#444;font-weight:normal;">1</div>
<div class="t" style="left:401.10px;width:120px;text-align:center;top:400.45px;font-size:5.43px;line-height:5.43px;color:#444;font-weight:normal;">0</div>
<div class="t" style="left:432.10px;width:120px;text-align:center;top:400.45px;font-size:5.43px;line-height:5.43px;color:#444;font-weight:normal;">1</div>
<div class="t" style="left:462.50px;width:120px;text-align:center;top:400.45px;font-size:5.43px;line-height:5.43px;color:#111;font-weight:bold;">2</div>
<div class="t" style="left:492.35px;width:120px;text-align:center;top:400.45px;font-size:5.43px;line-height:5.43px;color:#444;font-weight:normal;">0</div>
<div class="t" style="left:461.80px;width:120px;text-align:right;top:400.45px;font-size:5.43px;line-height:5.43px;color:#444;font-weight:normal;">50%</div>
<div class="r" style="left:586.60px;top:400.35px;width:6px;height:6px;border-radius:50%;background:#e57373"></div>
<div class="t" style="left:309.10px;top:508.80px;font-size:5.43px;line-height:5.43px;color:#333;font-weight:bold;">Total</div>
<div class="t" style="left:370.50px;width:120px;text-align:center;top:508.80px;font-size:5.43px;line-height:5.43px;color:#333;font-weight:bold;">2</div>
<div class="t" style="left:401.10px;width:120px;text-align:center;top:508.80px;font-size:5.43px;line-height:5.43px;color:#333;font-weight:bold;">4</div>
<div class="t" style="left:432.10px;width:120px;text-align:center;top:508.80px;font-size:5.43px;line-height:5.43px;color:#333;font-weight:bold;">2</div>
<div class="t" style="left:462.50px;width:120px;text-align:center;top:508.80px;font-size:5.43px;line-height:5.43px;color:#333;font-weight:bold;">8</div>
<div class="t" style="left:492.35px;width:120px;text-align:center;top:508.80px;font-size:5.43px;line-height:5.43px;color:#333;font-weight:bold;">2</div>
<div class="t" style="left:461.80px;width:120px;text-align:right;top:508.80px;font-size:5.43px;line-height:5.43px;color:#333;font-weight:bold;">63%</div>
<div class="r" style="left:586.60px;top:508.60px;width:6px;height:6px;border-radius:50%;background:#e57373"></div>
</body></html>
